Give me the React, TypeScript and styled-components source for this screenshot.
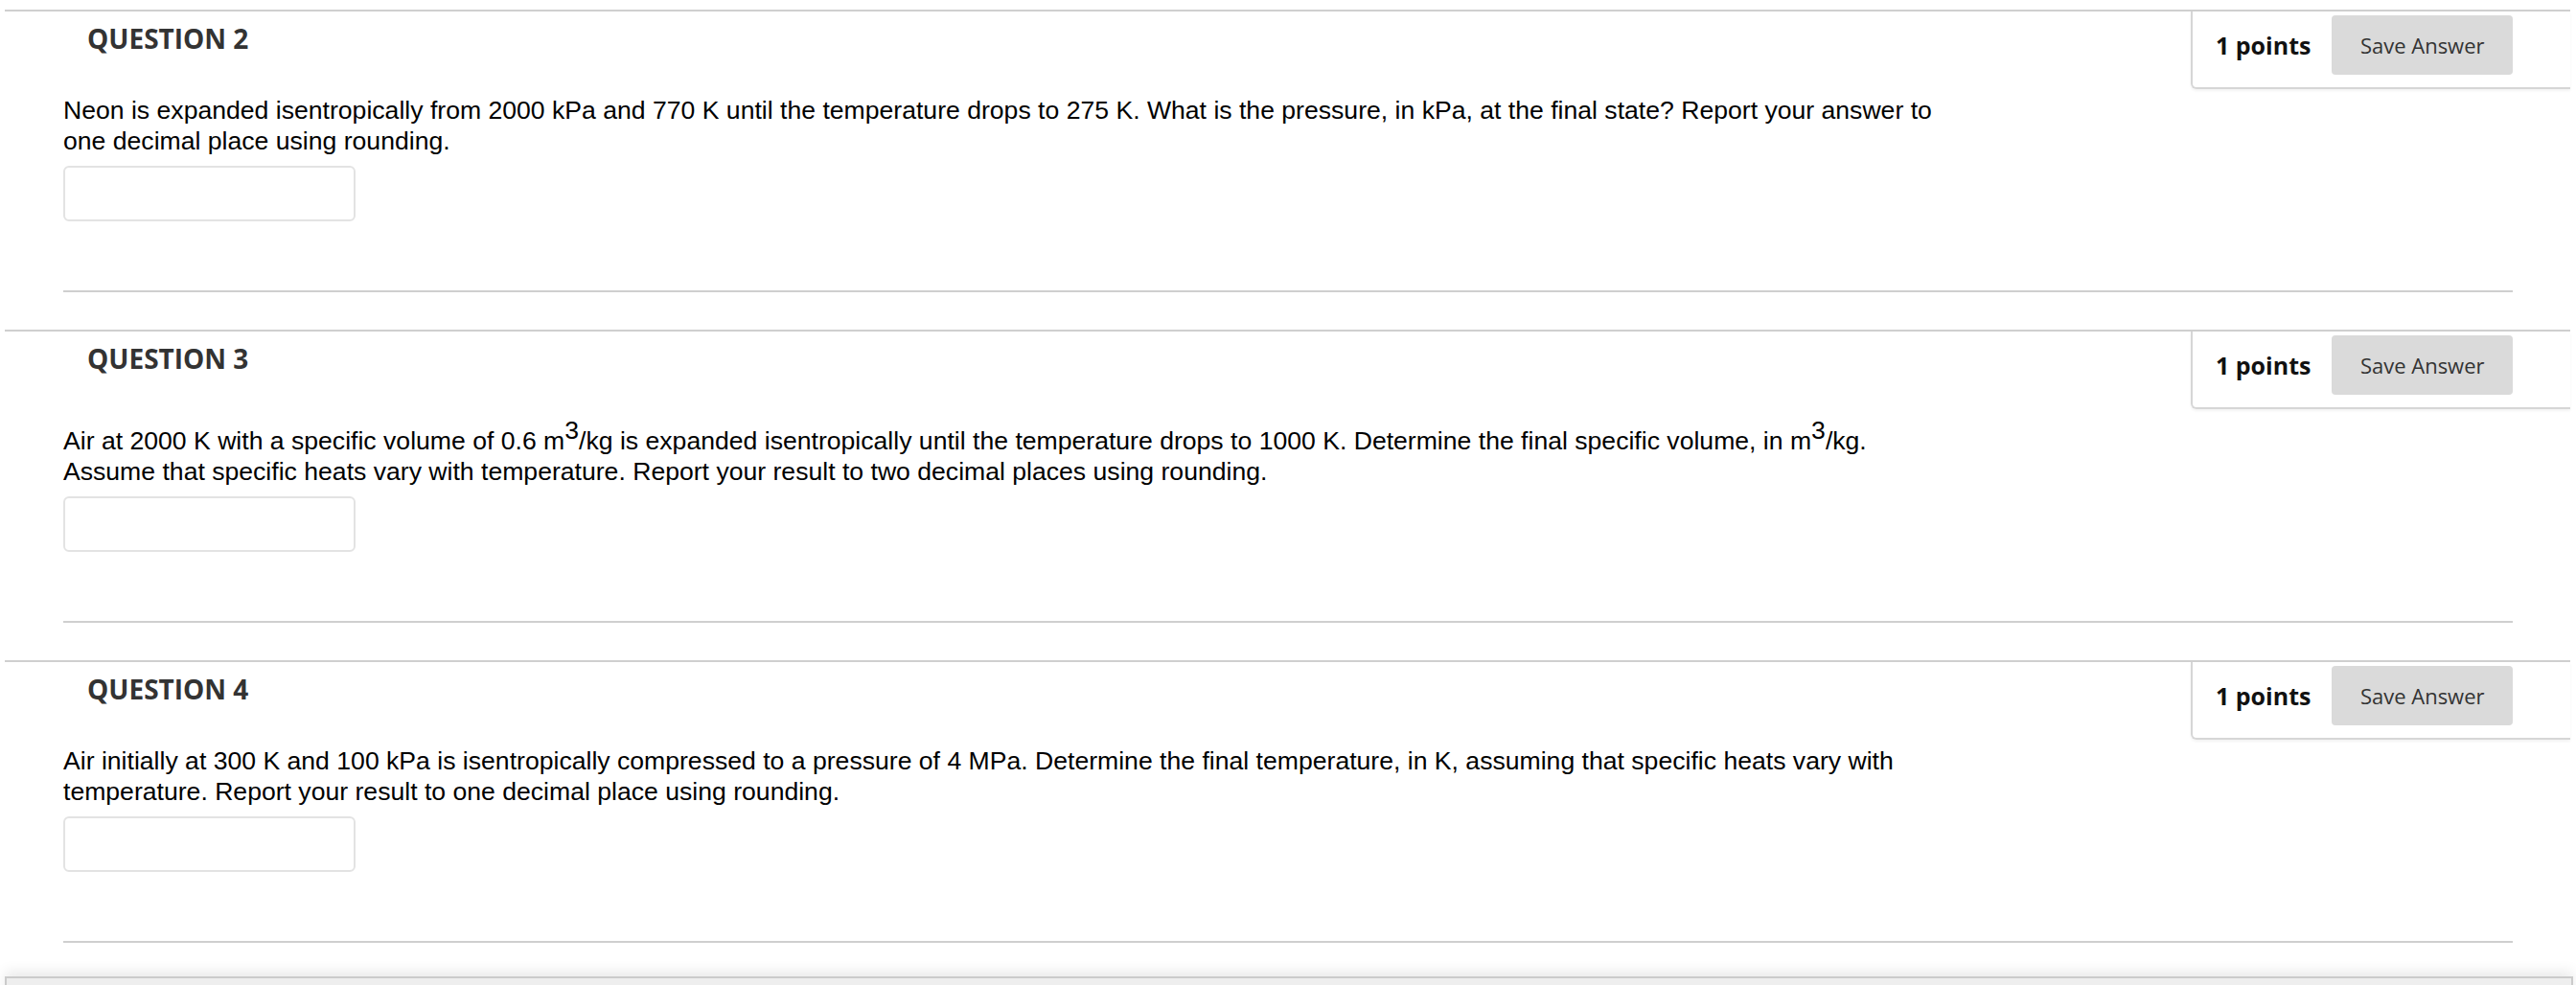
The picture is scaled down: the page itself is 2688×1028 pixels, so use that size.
import React from 'react'
import styled, { createGlobalStyle } from 'styled-components'

const GlobalStyle = createGlobalStyle`
  html, body {
    margin: 0;
    padding: 0;
    background: #fff;
  }
  body {
    font-family: "Liberation Sans", Arial, sans-serif;
  }
`

type Question = {
  num: number
  points: number
  text: React.ReactNode
}

const questions: Question[] = [
  {
    num: 2,
    points: 1,
    text: (
      <>
        Neon is expanded isentropically from 2000 kPa and 770 K until the temperature drops to 275 K. What is the
        pressure, in kPa, at the final state? Report your answer to one decimal place using rounding.
      </>
    ),
  },
  {
    num: 3,
    points: 1,
    text: (
      <>
        Air at 2000 K with a specific volume of 0.6 m<sup>3</sup>/kg is expanded isentropically until the temperature
        drops to 1000 K. Determine the final specific volume, in m<sup>3</sup>/kg. Assume that specific heats vary with
        temperature. Report your result to two decimal places using rounding.
      </>
    ),
  },
  {
    num: 4,
    points: 1,
    text: (
      <>
        Air initially at 300 K and 100 kPa is isentropically compressed to a pressure of 4 MPa. Determine the final
        temperature, in K, assuming that specific heats vary with temperature. Report your result to one decimal place
        using rounding.
      </>
    ),
  },
]

export default function App() {
  return (
    <>
      <GlobalStyle />
      <Page>
        {questions.map((q) => (
          <QuestionItem key={q.num}>
            <HeaderRow>
              <Title>QUESTION {q.num}</Title>
              <PointsBox>
                <Points>{q.points} points</Points>
                <SaveButton type="button">Save Answer</SaveButton>
              </PointsBox>
            </HeaderRow>
            <Prompt>{q.text}</Prompt>
            <AnswerInput type="text" aria-label={`Answer for question ${q.num}`} />
            <Divider />
          </QuestionItem>
        ))}
      </Page>
      <BottomBar />
    </>
  )
}

const Page = styled.div`
  padding: 10px 6px 0 5px;
`

const QuestionItem = styled.section`
  border-top: 2px solid #cfcfcf;
  padding-bottom: 39px;
`

const HeaderRow = styled.div`
  display: flex;
  justify-content: space-between;
  align-items: flex-start;
`

const Title = styled.h3`
  margin: 8px 0 0 86px;
  font-family: "Open Sans", "Liberation Sans", sans-serif;
  font-weight: 700;
  font-size: 28px;
  line-height: 40px;
  color: #333;
`

const PointsBox = styled.div`
  display: flex;
  align-items: center;
  gap: 22px;
  width: 396px;
  box-sizing: border-box;
  padding: 4px 60px 13px 24px;
  border-left: 2px solid #d6d6d6;
  border-bottom: 2px solid #d6d6d6;
  border-bottom-left-radius: 6px;
  box-shadow: 0 2px 3px rgba(0, 0, 0, 0.05);
`

const Points = styled.span`
  font-family: "Open Sans", "Liberation Sans", sans-serif;
  font-weight: 700;
  font-size: 25px;
  color: #111;
  white-space: nowrap;
`

const SaveButton = styled.button`
  width: 190px;
  height: 62px;
  border: 0;
  border-radius: 4px;
  background: #dadada;
  font-family: "Open Sans", "Liberation Sans", sans-serif;
  font-size: 22px;
  color: #333;
  cursor: pointer;
  padding: 0;
`

const Prompt = styled.div`
  margin: 6px 0 0 61px;
  max-width: 1970px;
  font-size: 26.6px;
  line-height: 32px;
  color: #000;

  sup {
    font-size: 1em;
    vertical-align: 11px;
  }
`

const AnswerInput = styled.input`
  display: block;
  margin: 10px 0 0 61px;
  width: 305px;
  height: 58px;
  box-sizing: border-box;
  border: 2px solid #e3e3e3;
  border-radius: 6px;
  background: #fff;
  outline: none;
`

const Divider = styled.hr`
  margin: 72px 60px 0 61px;
  height: 0;
  border: 0;
  border-top: 2px solid #cfcfcf;
`

const BottomBar = styled.div`
  position: fixed;
  left: 5px;
  right: 3px;
  bottom: -34px;
  height: 39px;
  background: #eeeeee;
  border: 2px solid #cbcbcb;
  box-shadow: 0 -6px 12px rgba(0, 0, 0, 0.08);
`
